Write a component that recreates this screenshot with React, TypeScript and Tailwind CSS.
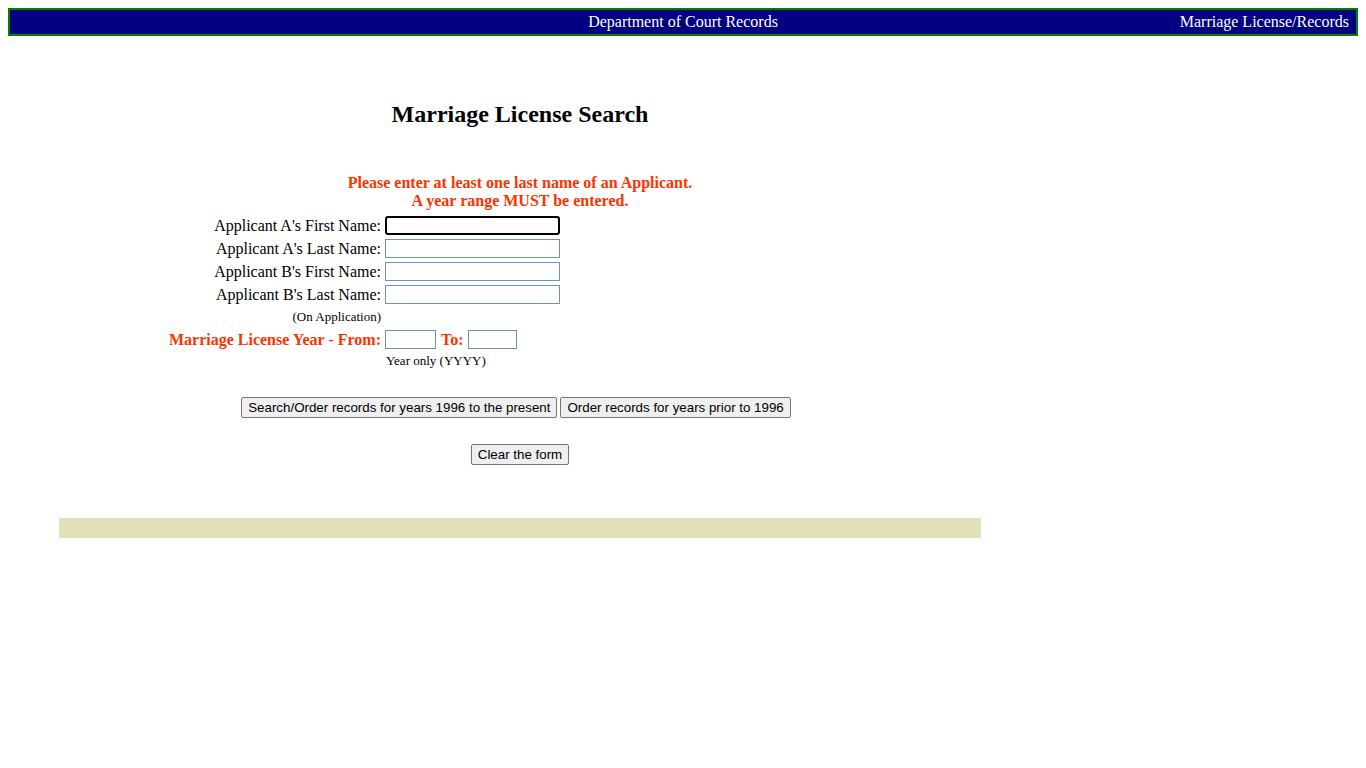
import React from 'react';

const serif = "font-['Liberation_Serif','Times_New_Roman',serif]";
const sans = "font-['Liberation_Sans',Arial,sans-serif]";

function TextField({ width, focused }: { width: string; focused?: boolean }) {
  return (
    <input
      type="text"
      className={
        `${width} h-[19px] bg-white outline-none ` +
        (focused
          ? 'border-2 border-black rounded-[3px]'
          : 'border border-[#6b93b5]')
      }
    />
  );
}

function FormButton({ label }: { label: string }) {
  return (
    <button
      type="button"
      className={`${sans} h-[21px] px-[6px] text-[13.33px] leading-none text-black bg-[#efefef] border border-[#767676] rounded-[2px]`}
    >
      {label}
    </button>
  );
}

function NameRow({ label, focused }: { label: string; focused?: boolean }) {
  return (
    <div className="flex items-center h-[23px]">
      <span className="w-[326px] text-right pr-[4px] text-[16px] leading-none">{label}</span>
      <TextField width="w-[175px]" focused={focused} />
    </div>
  );
}

export default function App() {
  return (
    <div className={`${serif} min-h-screen bg-white p-[8px] text-black`}>
      {/* Top bar */}
      <div className="relative h-[28px] bg-[#000080] border-2 border-[#008000] flex items-center text-white text-[16px]">
        <span className="flex-1 text-center">Department of Court Records</span>
        <span className="absolute right-[7px]">Marriage License/Records</span>
      </div>

      <div className="ml-[51px] w-[922px]">
        <h1 className="text-center text-[24px] font-bold leading-none mt-[66px]">
          Marriage License Search
        </h1>

        <div className="text-center text-[#ff3300] font-bold text-[16px] leading-[18px] mt-[48px]">
          <p>Please enter at least one last name of an Applicant.</p>
          <p>A year range MUST be entered.</p>
        </div>

        <form className="mt-[4px]">
          <NameRow label="Applicant A's First Name:" focused />
          <NameRow label="Applicant A's Last Name:" />
          <NameRow label="Applicant B's First Name:" />
          <NameRow label="Applicant B's Last Name:" />

          <div className="flex h-[21px] items-center">
            <span className="w-[326px] text-right pr-[4px] text-[13px]">(On Application)</span>
          </div>

          <div className="flex items-center h-[23px] mt-[1px]">
            <span className="w-[326px] text-right pr-[4px] text-[16px] font-bold text-[#ff3300]">
              Marriage License Year - From:
            </span>
            <TextField width="w-[51px]" />
            <span className="text-[16px] font-bold text-[#ff3300] pl-[5px] pr-[4px]">To:</span>
            <TextField width="w-[49px]" />
          </div>

          <div className="pl-[327px] text-[13px] leading-[16px] mt-[2px]">Year only (YYYY)</div>

          <div className="flex justify-center gap-[3px] mt-[28px] pr-[8px]">
            <FormButton label="Search/Order records for years 1996 to the present" />
            <FormButton label="Order records for years prior to 1996" />
          </div>

          <div className="flex justify-center mt-[26px]">
            <FormButton label="Clear the form" />
          </div>
        </form>

        <div className="h-[20px] bg-[#e3e1b9] mt-[53px]" />
      </div>
    </div>
  );
}
